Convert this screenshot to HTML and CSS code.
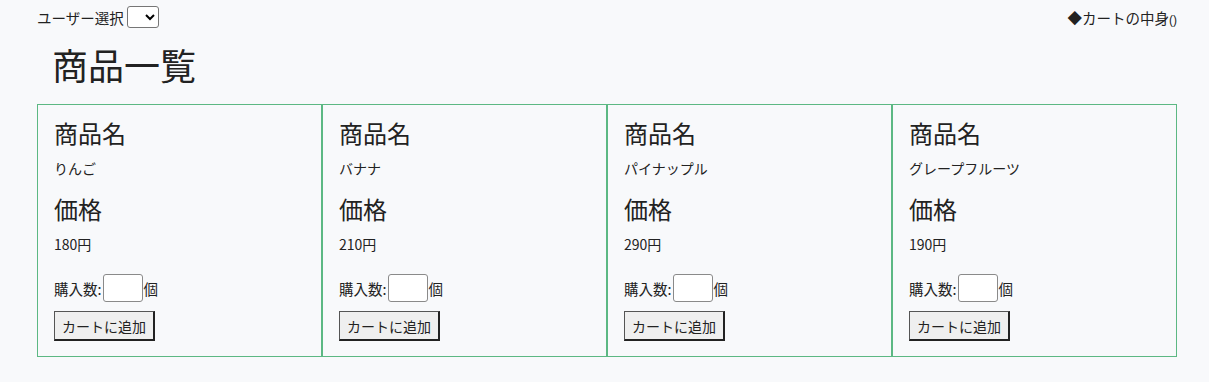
FILE: index.html
```html
<!DOCTYPE html>
<html lang="ja">
<head>
    <meta charset="UTF-8">
    <meta name="viewport" content="width=device-width, initial-scale=1.0">
    <title>商品一覧</title>
    <link rel="stylesheet" href="styles.css">
</head>
<body>
    <div class="page">
        <div class="topbar">
            <div class="user-select">
                <label for="user">ユーザー選択</label>
                <select id="user" class="user-dropdown"></select>
            </div>
            <div class="cart-link">◆カートの中身<span class="cart-count">()</span></div>
        </div>

        <h1 class="page-title">商品一覧</h1>

        <div class="product-list">
            <div class="product-card">
                <h2 class="label">商品名</h2>
                <p class="value">りんご</p>
                <h2 class="label">価格</h2>
                <p class="value">180円</p>
                <div class="qty-row">購入数:<input type="text" class="qty-input">個</div>
                <button class="add-btn">カートに追加</button>
            </div>
            <div class="product-card">
                <h2 class="label">商品名</h2>
                <p class="value">バナナ</p>
                <h2 class="label">価格</h2>
                <p class="value">210円</p>
                <div class="qty-row">購入数:<input type="text" class="qty-input">個</div>
                <button class="add-btn">カートに追加</button>
            </div>
            <div class="product-card">
                <h2 class="label">商品名</h2>
                <p class="value">パイナップル</p>
                <h2 class="label">価格</h2>
                <p class="value">290円</p>
                <div class="qty-row">購入数:<input type="text" class="qty-input">個</div>
                <button class="add-btn">カートに追加</button>
            </div>
            <div class="product-card">
                <h2 class="label">商品名</h2>
                <p class="value">グレープフルーツ</p>
                <h2 class="label">価格</h2>
                <p class="value">190円</p>
                <div class="qty-row">購入数:<input type="text" class="qty-input">個</div>
                <button class="add-btn">カートに追加</button>
            </div>
        </div>
    </div>
</body>
</html>
```

FILE: styles.css
```css
body, html {
    margin: 0;
    padding: 0;
    background-color: #f8f9fb;
    color: #222;
    font-family: "Noto Sans CJK JP", "Noto Sans", sans-serif;
}

.page {
    width: 1140px;
    margin-left: 37px;
}

.topbar {
    display: flex;
    justify-content: space-between;
    align-items: center;
    height: 34px;
    font-size: 14.5px;
}

.user-select {
    display: flex;
    align-items: center;
    gap: 3px;
}

.user-dropdown {
    width: 32px;
    height: 22px;
    border: 1px solid #767676;
    border-radius: 3px;
    background-color: #fff;
}

.cart-count {
    font-family: "Liberation Sans", sans-serif;
    font-size: 12px;
}

.page-title {
    margin: 8px 0 18px 0;
    padding-left: 15px;
    font-size: 36px;
    line-height: 44px;
    font-weight: normal;
}

.product-list {
    display: grid;
    grid-template-columns: repeat(4, 285px);
}

.product-card {
    border: 1px solid #5cb883;
    padding: 12px 16px 15px 16px;
}

.label {
    margin: 0;
    font-size: 24px;
    line-height: 32px;
    font-weight: normal;
}

.label + .value {
    margin-top: 9px;
}

.value {
    margin: 0 0 15px 0;
    font-size: 14px;
    line-height: 20px;
}

.qty-row {
    display: flex;
    align-items: center;
    margin-top: 20px;
    font-size: 14.5px;
}

.qty-input {
    width: 40px;
    height: 28px;
    box-sizing: border-box;
    margin: 0 1px;
    border: 1px solid #8a8a8a;
    border-radius: 3px;
    background-color: #fff;
}

.add-btn {
    display: block;
    margin-top: 9px;
    height: 30px;
    padding: 0 7px;
    font-family: inherit;
    font-size: 14px;
    color: #222;
    background-color: #efefef;
    border: 1px solid #555;
    border-right: 2px solid #222;
    border-bottom: 2px solid #222;
}
```
